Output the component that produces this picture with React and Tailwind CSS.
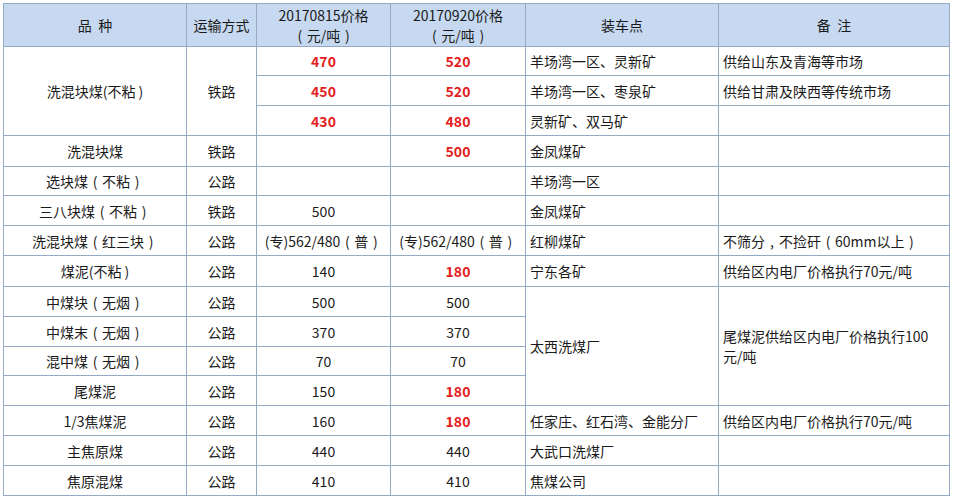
import React from 'react';

const RED = 'text-[#e3201c] font-bold';

// full-width punctuation sits centred in the source font, so centre it by hand
const Txt = ({ children }) => {
  if (typeof children !== 'string') return children;
  const parts = children.split(/([（），])/);
  return parts.map((p, i) => {
    if (p === '（') return <span key={i} className="inline-block w-[14px] text-center">(</span>;
    if (p === '）') return <span key={i} className="inline-block w-[14px] text-center">)</span>;
    if (p === '，') return <span key={i} className="inline-block w-[14px] text-center">,</span>;
    return <React.Fragment key={i}>{p}</React.Fragment>;
  });
};

const rows = [
  { h: 'h-[29px]', name: '洗混块煤(不粘 )', nameSpan: 3, way: '铁路', p1: '470', p2: '520', red1: true, red2: true, place: '羊场湾一区、灵新矿', note: '供给山东及青海等市场' },
  { h: 'h-[30px]', p1: '450', p2: '520', red1: true, red2: true, place: '羊场湾一区、枣泉矿', note: '供给甘肃及陕西等传统市场' },
  { h: 'h-[30px]', p1: '430', p2: '480', red1: true, red2: true, place: '灵新矿、双马矿', note: '' },
  { h: 'h-[31px]', name: '洗混块煤', way: '铁路', p1: '', p2: '500', red2: true, place: '金凤煤矿', note: '' },
  { h: 'h-[29px]', name: '选块煤（不粘）', way: '公路', p1: '', p2: '', place: '羊场湾一区', note: '' },
  { h: 'h-[30px]', name: '三八块煤（不粘）', way: '铁路', p1: '500', p2: '', place: '金凤煤矿', note: '' },
  { h: 'h-[30px]', name: '洗混块煤（红三块）', way: '公路', p1: '(专)562/480（普）', p2: '(专)562/480（普）', place: '红柳煤矿', note: '不筛分，不捡矸（60mm以上）' },
  { h: 'h-[31px]', name: '煤泥(不粘 )', way: '公路', p1: '140', p2: '180', red2: true, place: '宁东各矿', note: '供给区内电厂价格执行70元/吨' },
  { h: 'h-[30px]', name: '中煤块（无烟）', way: '公路', p1: '500', p2: '500', place: '太西洗煤厂', placeSpan: 4, note: '尾煤泥供给区内电厂价格执行100元/吨', noteSpan: 4 },
  { h: 'h-[30px]', name: '中煤末（无烟）', way: '公路', p1: '370', p2: '370' },
  { h: 'h-[29px]', name: '混中煤（无烟）', way: '公路', p1: '70', p2: '70' },
  { h: 'h-[30px]', name: '尾煤泥', way: '公路', p1: '150', p2: '180', red2: true },
  { h: 'h-[30px]', name: '1/3焦煤泥', way: '公路', p1: '160', p2: '180', red2: true, place: '任家庄、红石湾、金能分厂', note: '供给区内电厂价格执行70元/吨' },
  { h: 'h-[30px]', name: '主焦原煤', way: '公路', p1: '440', p2: '440', place: '大武口洗煤厂', note: '' },
  { h: 'h-[30px]', name: '焦原混煤', way: '公路', p1: '410', p2: '410', place: '焦煤公司', note: '' },
];

const cell = 'border border-[#95abc3] align-middle';

export default function App() {
  return (
    <div className="w-[955px] h-[500px] bg-white pt-[3px] pl-[3px]" style={{ fontFamily: '"Microsoft YaHei", "Noto Sans CJK SC", "Noto Sans", sans-serif' }}>
      <table className="table-fixed border-collapse text-[14px] leading-[20px] text-[#1a1a1a]">
        <colgroup>
          <col className="w-[183px]" />
          <col className="w-[70px]" />
          <col className="w-[134px]" />
          <col className="w-[135px]" />
          <col className="w-[193px]" />
          <col className="w-[231px]" />
        </colgroup>
        <thead>
          <tr className="h-[43px] bg-[#c6d9f0]">
            <th className={`${cell} font-normal text-center`}>品&nbsp;&nbsp;种</th>
            <th className={`${cell} font-normal text-center`}>运输方式</th>
            <th className={`${cell} font-normal text-center`}>20170815价格<br /><Txt>（元/吨）</Txt></th>
            <th className={`${cell} font-normal text-center`}>20170920价格<br /><Txt>（元/吨）</Txt></th>
            <th className={`${cell} font-normal text-center`}>装车点</th>
            <th className={`${cell} font-normal text-center`}>备&nbsp;&nbsp;注</th>
          </tr>
        </thead>
        <tbody>
          {rows.map((r, i) => (
            <tr key={i} className={r.h}>
              {r.name !== undefined && (
                <td rowSpan={r.nameSpan || 1} className={`${cell} text-center`}><Txt>{r.name}</Txt></td>
              )}
              {r.way !== undefined && (
                <td rowSpan={r.nameSpan || 1} className={`${cell} text-center`}>{r.way}</td>
              )}
              <td className={`${cell} text-center ${r.red1 ? RED : ''}`}><Txt>{r.p1}</Txt></td>
              <td className={`${cell} text-center ${r.red2 ? RED : ''}`}><Txt>{r.p2}</Txt></td>
              {r.place !== undefined && (
                <td rowSpan={r.placeSpan || 1} className={`${cell} text-left pl-1`}>{r.place}</td>
              )}
              {r.note !== undefined && (
                <td rowSpan={r.noteSpan || 1} className={`${cell} text-left pl-1 pr-2`}><Txt>{r.note}</Txt></td>
              )}
            </tr>
          ))}
        </tbody>
      </table>
    </div>
  );
}
